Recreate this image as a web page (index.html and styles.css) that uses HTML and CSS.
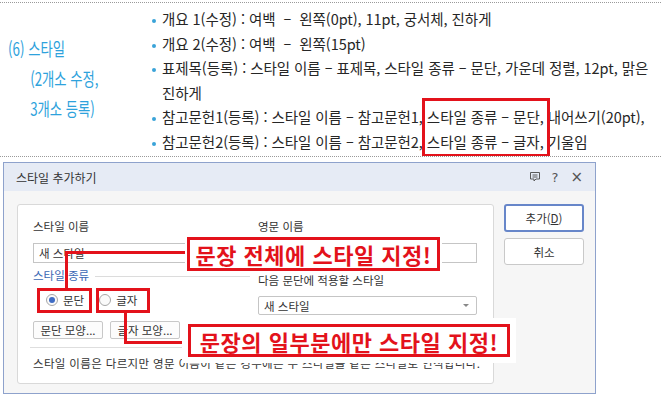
FILE: index.html
```html
<!DOCTYPE html>
<html lang="ko">
<head>
<meta charset="utf-8">
<title>스타일 추가하기</title>
<link rel="stylesheet" href="styles.css">
</head>
<body>
<section class="top">
  <div class="heading">
    <div class="hline">(6) 스타일</div>
    <div class="hline sub">(2개소 수정,</div>
    <div class="hline sub">3개소 등록)</div>
  </div>
  <ul class="bullets">
    <li>개요 1(수정) : 여백&nbsp; –&nbsp; 왼쪽(0pt), 11pt, 궁서체, 진하게</li>
    <li>개요 2(수정) : 여백&nbsp; –&nbsp; 왼쪽(15pt)</li>
    <li>표제목(등록) : 스타일 이름 – 표제목, 스타일 종류 – 문단, 가운데 정렬, 12pt, 맑은<br>진하게</li>
    <li>참고문헌1(등록) : 스타일 이름 – 참고문헌1, <span class="hl">스타일 종류 – 문단,</span> 내어쓰기(20pt),</li>
    <li>참고문헌2(등록) : 스타일 이름 – 참고문헌2, 스타일 종류 – 글자, 기울임</li>
  </ul>
</section>

<section class="dialog">
  <header class="titlebar">
    <span class="title">스타일 추가하기</span>
    <div class="tb-icons">
      <svg width="12" height="12" viewBox="0 0 12 12" aria-hidden="true"><path d="M1.5 1.5h9v6.5h-3.5l-2 2v-2h-3.5z" fill="none" stroke="#5a5a5a" stroke-width="1"/><path d="M3.5 4h5M3.5 6h5" stroke="#5a5a5a" stroke-width="1"/></svg>
      <span class="q">?</span>
      <span class="x">×</span>
    </div>
  </header>
  <div class="dbody">
    <div class="panel">
      <div class="cols">
        <div class="col left">
          <div class="lbl">스타일 이름</div>
          <div class="input">새 스타일</div>
          <div class="group"><span>스타일 종류</span><i class="gline"></i></div>
          <div class="radios">
            <span class="radio on"></span><span class="rtext">문단</span>
            <span class="radio"></span><span class="rtext">글자</span>
          </div>
        </div>
        <div class="col right">
          <div class="lbl">영문 이름</div>
          <div class="input wide"></div>
          <div class="lbl lbl2">다음 문단에 적용할 스타일</div>
          <div class="select"><span>새 스타일</span><span class="arrow"></span></div>
        </div>
      </div>
      <div class="btnrow">
        <span class="sbtn">문단 모양...</span>
        <span class="sbtn">글자 모양...</span>
        <span class="sbtn blank"></span>
      </div>
      <div class="sep"></div>
      <div class="desc">스타일 이름은 다르지만 영문 이름이 같은 경우에는 두 스타일을 같은 스타일로 인식합니다.</div>
    </div>
    <div class="side">
      <span class="btn primary">추가(<u>D</u>)</span>
      <span class="btn">취소</span>
    </div>
  </div>

  <div class="conn conn1"></div>
  <div class="conn conn2"></div>
  <div class="hbox hbox1"></div>
  <div class="hbox hbox2"></div>
  <div class="callout callout1">문장 전체에 스타일 지정!</div>
  <div class="callout callout2">문장의 일부분에만 스타일 지정!</div>
</section>
</body>
</html>
```

FILE: styles.css
```css
* { box-sizing: border-box; }
html, body { margin: 0; padding: 0; background: #fff; overflow: hidden; }
body {
  width: 661px;
  height: 397px;
  font-family: "Noto Sans CJK KR", "Noto Sans", sans-serif;
  color: #222;
}

/* ---------- top part ---------- */
.top {
  position: relative;
  margin-top: 2px;
  height: 155px;
  border-top: 1px dotted #9a9a9a;
  border-bottom: 1px dotted #9a9a9a;
  display: flex;
  overflow: hidden;
}
.heading {
  flex: none;
  width: 152px;
  padding: 30px 0 0 8px;
  color: #2ea2dc;
  font-size: 18px;
  line-height: 30px;
}
.hline {
  white-space: nowrap;
  transform: scaleX(0.74);
  transform-origin: left center;
}
.hline.sub { padding-left: 30px; }

.bullets {
  list-style: none;
  margin: 0;
  padding: 4px 0 0 0;
  font-size: 14.5px;
  line-height: 24.6px;
  letter-spacing: -0.05px;
  color: #262626;
  white-space: nowrap;
}
.bullets li { padding-left: 10px; }
.bullets li::before {
  content: "";
  display: inline-block;
  width: 4px;
  height: 4px;
  border-radius: 50%;
  background: #3aa3d8;
  margin-left: -10px;
  margin-right: 6px;
  vertical-align: 2px;
}
.hl { position: relative; }
.hl::after {
  content: "";
  position: absolute;
  left: -5px;
  right: -6px;
  top: -8px;
  height: 53px;
  border: 3px solid #e3121b;
}

/* ---------- dialog ---------- */
.dialog {
  position: relative;
  margin: 5px 0 0 3px;
  width: 593px;
  height: 232px;
  border: 1px solid #8ea2cc;
  background: #f6f6f6;
  font-size: 11.5px;
  color: #333;
}
.titlebar {
  height: 28px;
  background: #e6ebf5;
  display: flex;
  align-items: center;
  justify-content: space-between;
  padding: 0 12px 0 12px;
}
.title { font-size: 12px; color: #333; }
.tb-icons { display: flex; align-items: center; gap: 11px; color: #555; }
.tb-icons .q { font-size: 13px; font-family: "DejaVu Sans", sans-serif; line-height: 1; }
.tb-icons .x { font-size: 15px; font-family: "DejaVu Sans", sans-serif; line-height: 1; margin-left: 1px; }

.dbody {
  display: flex;
  gap: 10px;
  padding: 13px 0 0 13px;
}
.panel {
  flex: none;
  width: 477px;
  height: 180px;
  background: #fff;
  border: 1px solid #d9d9d9;
  border-radius: 3px;
  padding: 13px 16px 0 15px;
}
.cols { display: flex; gap: 8px; }
.col.left { width: 217px; }
.col.right { width: 219px; }
.lbl { height: 16px; line-height: 16px; white-space: nowrap; }
.lbl2 { margin-top: 9px; }
.input {
  margin-top: 9px;
  height: 20px;
  width: 210px;
  border: 1px solid #c5c5c5;
  background: #fff;
  padding: 0 5px;
  line-height: 18px;
}
.input.wide { width: 219px; }
.group {
  margin-top: 4px;
  height: 16px;
  line-height: 16px;
  display: flex;
  align-items: center;
  gap: 6px;
  color: #3a68b4;
}
.gline { flex: 1; height: 1px; background: #dcdcdc; margin-top: 3px; }
.radios {
  margin-top: 9px;
  height: 16px;
  display: flex;
  align-items: center;
  padding-left: 13px;
}
.radio {
  width: 12px;
  height: 12px;
  border-radius: 50%;
  border: 1px solid #a6a6a6;
  background: #fafafa;
  display: flex;
  align-items: center;
  justify-content: center;
}
.radio.on::after {
  content: "";
  width: 6px;
  height: 6px;
  border-radius: 50%;
  background: #3f6cc4;
}
.rtext { margin-left: 5px; margin-right: 15px; }
.select {
  margin-top: 8px;
  height: 19px;
  border: 1px solid #c5c5c5;
  border-radius: 2px;
  padding: 0 5px;
  display: flex;
  align-items: center;
  justify-content: space-between;
}
.arrow {
  width: 0;
  height: 0;
  border-left: 3px solid transparent;
  border-right: 3px solid transparent;
  border-top: 3px solid #888;
  margin-right: 2px;
}
.btnrow { display: flex; gap: 7px; margin-top: 6px; }
.sbtn {
  width: 70px;
  height: 18px;
  line-height: 16px;
  text-align: center;
  border: 1px solid #c8c8c8;
  border-radius: 2px;
  background: #fcfcfc;
  white-space: nowrap;
}
.sep { margin: 8px 0 0 -3px; height: 1px; background: #dedede; width: 447px; }
.desc { margin-top: 7px; height: 16px; line-height: 16px; white-space: nowrap; letter-spacing: 0.35px; }

.side { display: flex; flex-direction: column; gap: 6px; }
.btn {
  width: 80px;
  height: 27px;
  display: flex;
  align-items: center;
  justify-content: center;
  background: #fff;
  border: 1px solid #c9c9c9;
  border-radius: 3px;
}
.btn.primary { height: 28px; border: 2px solid #6786c9; }
.btn u { text-underline-offset: 1px; }

/* ---------- annotations ---------- */
.conn { position: absolute; border-color: #e3121b; border-style: solid; border-width: 0; }
.conn1 { left: 61px; top: 88px; width: 126px; height: 37px; border-left-width: 3px; border-top-width: 3px; }
.conn2 { left: 120px; top: 150px; width: 68px; height: 31px; border-left-width: 3px; border-bottom-width: 3px; }
.hbox { position: absolute; top: 125px; height: 25px; border: 3px solid #e3121b; }
.hbox1 { left: 33px; width: 55px; }
.hbox2 { left: 92px; width: 54px; }
.callout {
  position: absolute;
  background: #fff;
  border: 3px solid #e3121b;
  color: #e3121b;
  font-weight: 700;
  font-size: 22px;
  letter-spacing: 0.5px;
  display: flex;
  align-items: center;
  justify-content: center;
  white-space: nowrap;
}
.callout1 { left: 183px; top: 74px; width: 253px; height: 34px; box-shadow: 0 0 0 2px #fff; }
.callout2 { left: 184px; top: 161px; width: 322px; height: 33px; box-shadow: 0 0 0 6px #fff; }
```
